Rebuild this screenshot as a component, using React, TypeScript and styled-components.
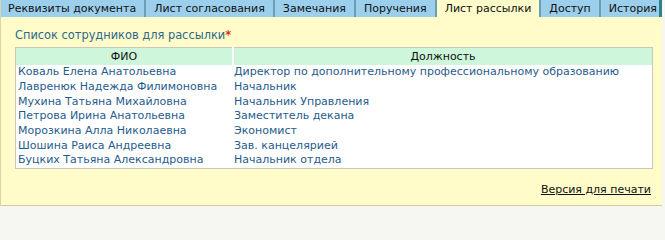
import React from 'react';
import styled, { createGlobalStyle } from 'styled-components';

const GlobalStyle = createGlobalStyle`
  html, body {
    margin: 0;
    padding: 0;
    background: #f6f6f2;
  }
  body {
    font-family: 'DejaVu Sans', Verdana, sans-serif;
    font-size: 11px;
  }
`;

const tabs = [
  'Реквизиты документа',
  'Лист согласования',
  'Замечания',
  'Поручения',
  'Лист рассылки',
  'Доступ',
  'История',
];

const ACTIVE_TAB = 4;

const recipients = [
  { name: 'Коваль Елена Анатольевна', post: 'Директор по дополнительному профессиональному образованию' },
  { name: 'Лавренюк Надежда Филимоновна', post: 'Начальник' },
  { name: 'Мухина Татьяна Михайловна', post: 'Начальник Управления' },
  { name: 'Петрова Ирина Анатольевна', post: 'Заместитель декана' },
  { name: 'Морозкина Алла Николаевна', post: 'Экономист' },
  { name: 'Шошина Раиса Андреевна', post: 'Зав. канцелярией' },
  { name: 'Буцких Татьяна Александровна', post: 'Начальник отдела' },
];

const Panel = styled.div`
  width: 662px;
  height: 206px;
  box-sizing: border-box;
  background: #fffcca;
  border-left: 1px solid #d9d6a6;
  border-bottom: 1px solid #cfcba0;
  display: flex;
  flex-direction: column;
`;

const TabBar = styled.div`
  display: flex;
  height: 17px;
  background: #9ccfec;
  border-right: 3px solid #2f7f8f;
  box-sizing: border-box;
`;

const Tab = styled.div<{ active?: boolean; first?: boolean }>`
  display: flex;
  align-items: center;
  padding: 0 8px 0 ${({ first }) => (first ? '7px' : '8px')};
  height: 17px;
  box-sizing: border-box;
  color: #111;
  white-space: nowrap;
  background: ${({ active }) => (active ? '#fffcca' : 'transparent')};
  border-left: ${({ first }) => (first ? 'none' : '2px solid #6c9db4')};
`;

const Content = styled.div`
  flex: 1;
  display: flex;
  flex-direction: column;
  padding: 11px 10px 0 14px;
`;

const Title = styled.div`
  color: #2b6a8c;
  font-size: 11.4px;
  line-height: 14px;
  height: 19px;
`;

const Required = styled.span`
  color: #e0321a;
  font-weight: bold;
`;

const Table = styled.table`
  width: 638px;
  border-collapse: collapse;
  border: 1px solid #c9c8bc;
  background: #fff;
`;

const HeadCell = styled.th<{ width?: number }>`
  height: 17px;
  width: ${({ width }) => (width ? `${width}px` : 'auto')};
  padding: 0;
  background: #cdf6da;
  font-weight: normal;
  color: #111;
  text-align: center;
  border-left: 2px solid #fff;

  &:first-child {
    border-left: none;
  }
`;

const Cell = styled.td<{ wide?: boolean }>`
  height: 14.67px;
  line-height: 14px;
  padding: 0 0 0 ${({ wide }) => (wide ? '1px' : '2px')};
  color: #1f5c8c;
  white-space: nowrap;
`;

const Footer = styled.div`
  display: flex;
  justify-content: flex-end;
  padding: 14px 1px 0 0;
`;

const PrintLink = styled.a`
  color: #111;
  text-decoration: underline;
  cursor: pointer;
`;

export default function App() {
  return (
    <>
      <GlobalStyle />
      <Panel>
        <TabBar>
          {tabs.map((t, i) => (
            <Tab key={t} first={i === 0} active={i === ACTIVE_TAB}>
              {t}
            </Tab>
          ))}
        </TabBar>
        <Content>
          <Title>
            Список сотрудников для рассылки<Required>*</Required>
          </Title>
          <Table>
            <thead>
              <tr>
                <HeadCell width={216}>ФИО</HeadCell>
                <HeadCell>Должность</HeadCell>
              </tr>
            </thead>
            <tbody>
              {recipients.map((r) => (
                <tr key={r.name}>
                  <Cell>{r.name}</Cell>
                  <Cell wide>{r.post}</Cell>
                </tr>
              ))}
            </tbody>
          </Table>
          <Footer>
            <PrintLink>Версия для печати</PrintLink>
          </Footer>
        </Content>
      </Panel>
    </>
  );
}
